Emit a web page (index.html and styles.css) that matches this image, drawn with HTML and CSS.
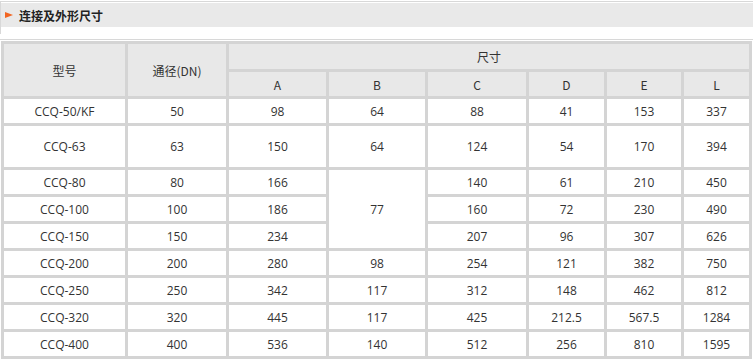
FILE: index.html
```html
<!DOCTYPE html>
<html lang="zh-CN">
<head>
<meta charset="utf-8">
<title>连接及外形尺寸</title>
<link rel="stylesheet" href="styles.css">
</head>
<body>
<div class="section">
  <div class="bar"><span class="arrow"></span><span class="title">连接及外形尺寸</span></div>
</div>
<div class="rule"></div>
<table class="spec">
  <colgroup>
    <col class="c-model"><col class="c-dn"><col class="c-a"><col class="c-b"><col class="c-c"><col class="c-d"><col class="c-e"><col class="c-l">
  </colgroup>
  <thead>
    <tr class="h1"><th rowspan="2">型号</th><th rowspan="2">通径(DN)</th><th colspan="6">尺寸</th></tr>
    <tr class="h2"><th>A</th><th>B</th><th>C</th><th>D</th><th>E</th><th>L</th></tr>
  </thead>
  <tbody>
    <tr><td>CCQ-50/KF</td><td>50</td><td>98</td><td>64</td><td>88</td><td>41</td><td>153</td><td>337</td></tr>
    <tr class="tall"><td>CCQ-63</td><td>63</td><td>150</td><td>64</td><td>124</td><td>54</td><td>170</td><td>394</td></tr>
    <tr><td>CCQ-80</td><td>80</td><td>166</td><td rowspan="3">77</td><td>140</td><td>61</td><td>210</td><td>450</td></tr>
    <tr><td>CCQ-100</td><td>100</td><td>186</td><td>160</td><td>72</td><td>230</td><td>490</td></tr>
    <tr><td>CCQ-150</td><td>150</td><td>234</td><td>207</td><td>96</td><td>307</td><td>626</td></tr>
    <tr><td>CCQ-200</td><td>200</td><td>280</td><td>98</td><td>254</td><td>121</td><td>382</td><td>750</td></tr>
    <tr><td>CCQ-250</td><td>250</td><td>342</td><td>117</td><td>312</td><td>148</td><td>462</td><td>812</td></tr>
    <tr><td>CCQ-320</td><td>320</td><td>445</td><td>117</td><td>425</td><td>212.5</td><td>567.5</td><td>1284</td></tr>
    <tr><td>CCQ-400</td><td>400</td><td>536</td><td>140</td><td>512</td><td>256</td><td>810</td><td>1595</td></tr>
  </tbody>
</table>
</body>
</html>
```
FILE: styles.css
```css
html, body {
  margin: 0;
  padding: 0;
  background: #fff;
}
body {
  font-family: "Open Sans", "Noto Sans CJK SC", sans-serif;
  font-size: 12px;
  color: #333;
}
.section {
  margin-top: 1px;
  border-top: 1px solid #d8d8d8;
  border-left: 1px solid #d8d8d8;
  padding-top: 1px;
  height: 31px;
}
.bar {
  height: 24px;
  background: #e9e9e9;
  display: flex;
  align-items: center;
}
.arrow {
  width: 0;
  height: 0;
  border-top: 3px solid transparent;
  border-bottom: 3px solid transparent;
  border-left: 8px solid #f26522;
  margin-left: 4px;
  margin-right: 6px;
}
.title {
  font-family: "Noto Sans CJK SC", sans-serif;
  font-weight: bold;
  font-size: 12px;
  color: #222;
}
.rule {
  margin-top: 5px;
  height: 1px;
  background: #d8d8d8;
}
.spec {
  margin-top: 1px;
  margin-left: 1px;
  width: 750px;
  table-layout: fixed;
  border-collapse: collapse;
  border: 3px solid #d4d4d4;
}
.c-model { width: 124px; }
.c-dn { width: 101px; }
.c-a { width: 100px; }
.c-b { width: 99px; }
.c-c { width: 101px; }
.c-d { width: 78px; }
.c-e { width: 77px; }
.c-l { width: 68px; }
.spec th, .spec td {
  border: 3px solid #d4d4d4;
  padding: 0;
  text-align: center;
  font-weight: normal;
  height: 24px;
}
.spec th {
  background: #e8e8e8;
  font-family: "Noto Sans CJK SC", sans-serif;
}
.spec .h1 th { height: 25px; }
.spec td { background: #fff; }
.spec .tall td { height: 41px; }
```
